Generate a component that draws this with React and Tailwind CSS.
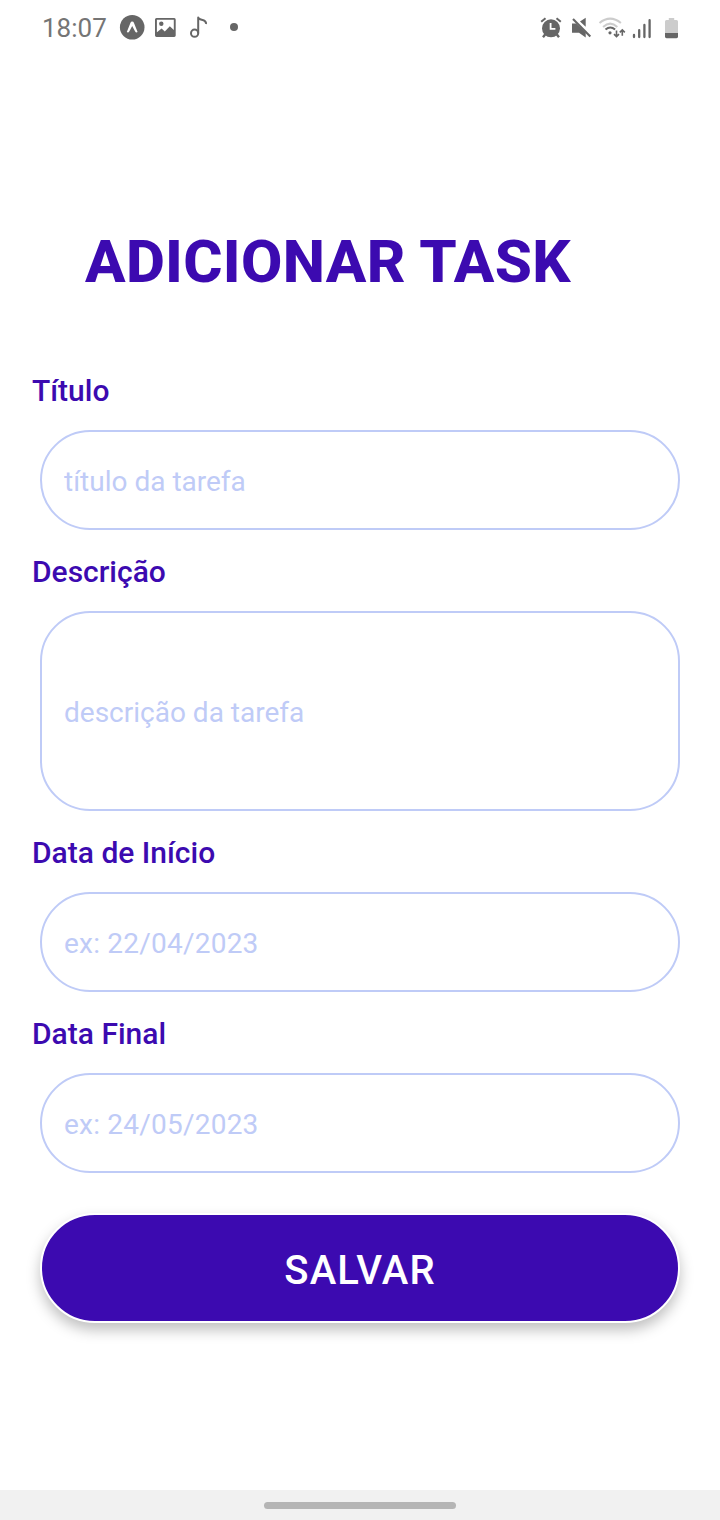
const fields = [
  { id: "titulo", label: "Título", placeholder: "título da tarefa", size: "h-[100px]" },
  { id: "descricao", label: "Descrição", placeholder: "descrição da tarefa", size: "h-[200px]" },
  { id: "inicio", label: "Data de Início", placeholder: "ex: 22/04/2023", size: "h-[100px] tracking-[0.22px]" },
  { id: "final", label: "Data Final", placeholder: "ex: 24/05/2023", size: "h-[100px] tracking-[0.22px]" },
];

function NotificationIcons() {
  return (
    <svg width="122" height="28" viewBox="0 0 122 28" fill="none">
      {/* Expo */}
      <circle cx="14.2" cy="13.3" r="12.3" fill="#666" />
      <path d="M8.8 18 12.5 8.8Q12.9 7.6 14.2 7.6T15.9 8.8L19.6 18Q18.1 19.2 17 17.2L14.2 11.9 11.4 17.2Q10.3 19.2 8.8 18Z" fill="#fff" />
      {/* Gallery */}
      <path fillRule="evenodd" d="M38.5 4H56.2Q57.7 4 57.7 5.5V21.5Q57.7 22.9 56.2 22.9H38.5Q37 22.9 37 21.5V5.5Q37 4 38.5 4ZM38.9 5.8V18.2L43.6 14.4 46.8 17.4 51.8 12.3 55.8 16.1V5.8Z" fill="#666" />
      <circle cx="43.3" cy="9.8" r="2.2" fill="#666" />
      {/* Music note */}
      <circle cx="76.6" cy="19.2" r="3.6" stroke="#666" strokeWidth="2" />
      <path d="M80.2 19.2V3.5C80.8 6.8 88.8 4.4 88 10" stroke="#666" strokeWidth="2" strokeLinejoin="round" />
      <circle cx="116" cy="13" r="4" fill="#666" />
    </svg>
  );
}

function SystemIcons() {
  return (
    <svg width="142" height="24" viewBox="540 15 142 24" fill="none">
      {/* Alarm */}
      <path d="m545.5 33-2.5 3.2m13.5-3.2 2.5 3.2" stroke="#666" strokeWidth="2.4" />
      <circle cx="551" cy="27.3" r="9" fill="#666" />
      <path d="m541.2 20.8 4.3-3.6m15.3 3.6-4.3-3.6" stroke="#666" strokeWidth="2" />
      <path d="M550.6 22V27.8H555.4" stroke="#fff" strokeWidth="1.8" />
      {/* Muted speaker */}
      <path d="M572 22.6H576.2L585.7 31.8V36.5L579 31.7H572ZM580 20.6 585.7 16.8V25.8Z" fill="#666" />
      <path d="m573 17.9 17.3 17.7" stroke="#666" strokeWidth="2.1" />
      {/* Wi-Fi */}
      <path d="M599.5 22Q610.2 13.3 620.9 22M603.1 26Q610.2 19.4 617.3 26" stroke="#ccc" strokeWidth="2.1" />
      <path d="M605.5 28.6Q610.3 24.3 615.1 28.6" stroke="#666" strokeWidth="2" />
      <circle cx="610" cy="31.8" r="1.6" fill="#666" />
      <path d="M616.5 29.5V35.6M614 33.1 616.5 35.6 619 33.1M622.3 34.8V28.9M619.8 31.4 622.3 28.9 624.8 31.4" stroke="#666" strokeWidth="1.6" />
      {/* Signal */}
      <path d="M634 34V36M639.2 29.2V36M644.4 24V36M649.6 19.2V36" stroke="#666" strokeWidth="2.3" strokeLinecap="round" />
      {/* Battery */}
      <path d="M668.8 17H674.2V19.1H676.5Q678 19.1 678 20.6V32H665V20.6Q665 19.1 666.5 19.1H668.8Z" fill="#ccc" />
      <path d="M665 32H678V35.8Q678 37.2 676.5 37.2H666.5Q665 37.2 665 35.8Z" fill="#666" />
    </svg>
  );
}

function Field({ id, label, placeholder, size }) {
  return (
    <div className="flex flex-col">
      <label htmlFor={id} className="ml-8 h-10 text-[30px] leading-[42px] font-medium text-[#3c0ab0]">
        {label}
      </label>
      <input
        id={id}
        placeholder={placeholder}
        className={`mx-10 mt-5 mb-[21px] rounded-[50px] border-2 border-[#bfcbf7] bg-transparent px-[22px] pt-[2px] text-[28px] text-[#3c0ab0] outline-none placeholder:text-[#bfcbf7] ${size}`}
      />
    </div>
  );
}

export default function App() {
  return (
    <div className="flex h-[1520px] w-[720px] flex-col bg-white font-['Roboto',sans-serif]">
      <header className="flex h-14 items-center justify-between pr-[38px] pl-[42px]">
        <div className="flex items-center">
          <span className="w-[76px] text-[26px] leading-8 text-[#757575]">18:07</span>
          <NotificationIcons />
        </div>
        <SystemIcons />
      </header>
      <main className="flex flex-1 flex-col">
        <h1 className="mt-[170px] mb-[74px] ml-[85px] h-[70px] text-[60px] leading-[71px] font-extrabold tracking-[0.3px] whitespace-nowrap text-[#3c0ab0]">
          ADICIONAR TASK
        </h1>
        <form className="flex flex-col">
          {fields.map((field) => (
            <Field key={field.id} {...field} />
          ))}
          <button
            type="button"
            className="mx-10 mt-[19px] h-[110px] rounded-[55px] border-2 border-white bg-[#3c0ab0] pt-[6px] text-[40px] font-medium tracking-[1.1px] text-white shadow-[0_7px_14px_rgba(0,0,0,0.25)]"
          >
            SALVAR
          </button>
        </form>
      </main>
      <footer className="flex h-[30px] items-center justify-center bg-[#f1f1f1]">
        <div className="h-[7px] w-48 rounded-full bg-[#b5b5b5]" />
      </footer>
    </div>
  );
}
